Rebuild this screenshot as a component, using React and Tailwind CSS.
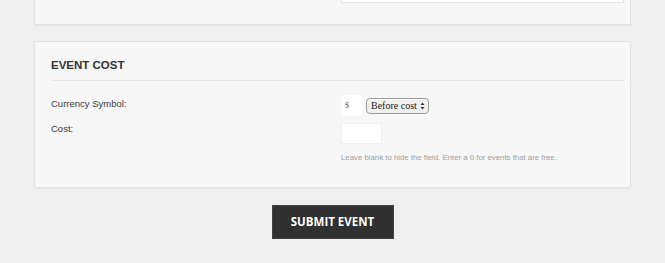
export default function App() {
  return (
    <div className="w-[665px] h-[263px] bg-[#efefef] overflow-hidden" style={{ fontFamily: '"Liberation Sans", Arial, sans-serif' }}>
      <div className="px-[34px]">
        {/* top card (cut off) */}
        <div className="h-[25px] bg-[#f7f7f7] border border-t-0 border-[#e2e2e2] shadow-[0_1px_1px_rgba(0,0,0,0.04)] flex">
          <div className="w-[306px]" />
          <div className="w-[283px] h-[3px] bg-white border-b border-[#e6e6e6] border-x" />
        </div>

        {/* event cost card */}
        <div className="mt-[16px] h-[147px] bg-[#f7f7f7] border border-[#e2e2e2] rounded-[2px] shadow-[0_1px_1px_rgba(0,0,0,0.04)] px-[16px]">
          <div className="pt-[16px] pb-[7px] border-b border-[#e6e6e6] mr-[-11px]">
            <h2 className="text-[11.5px] font-bold text-[#333] leading-[15px]">EVENT COST</h2>
          </div>
          <div className="flex mt-[14px]">
            <div className="w-[290px] text-[9.5px] text-[#3a3a3a] leading-[13px]">
              <div className="h-[22px] flex items-start pt-[2px]">Currency Symbol:</div>
              <div className="mt-[4px] h-[20px] pt-[1px]">Cost:</div>
            </div>
            <div className="flex-1">
              <div className="flex items-center h-[21px]">
                <div className="w-[21px] h-[21px] bg-white text-[8px] text-[#666] flex items-center pl-[4px]" style={{ fontFamily: '"Liberation Serif", serif' }}>$</div>
                <div className="ml-[4px] h-[16px] w-[63px] rounded-[4px] border border-[#9a9a9a] bg-[#f0f0f0] flex items-center pl-[4px] pr-[3px] text-[10px] text-[#222] whitespace-nowrap shadow-[inset_0_1px_0_#fff]" style={{ fontFamily: '"Liberation Serif", serif' }}>
                  <span>Before cost</span>
                  <svg className="ml-auto shrink-0" width="5" height="8" viewBox="0 0 5 8"><path d="M2.5 0.5 L4.5 3 L0.5 3 Z" fill="#333"/><path d="M2.5 7.5 L4.5 5 L0.5 5 Z" fill="#333"/></svg>
                </div>
              </div>
              <div className="mt-[7px] w-[41px] h-[21px] bg-white border border-[#f0f0f0]" />
              <div className="mt-[9px] text-[7.8px] text-[#a0a0a0] leading-[10px]">Leave blank to hide the field. Enter a 0 for events that are free.</div>
            </div>
          </div>
        </div>

        <div className="flex justify-center mt-[17px]">
          <button className="w-[122px] h-[34px] bg-[#303030] text-white text-[11.5px] font-bold border border-[#444]" style={{ fontFamily: '"Open Sans", sans-serif' }}>SUBMIT EVENT</button>
        </div>
      </div>
    </div>
  );
}
